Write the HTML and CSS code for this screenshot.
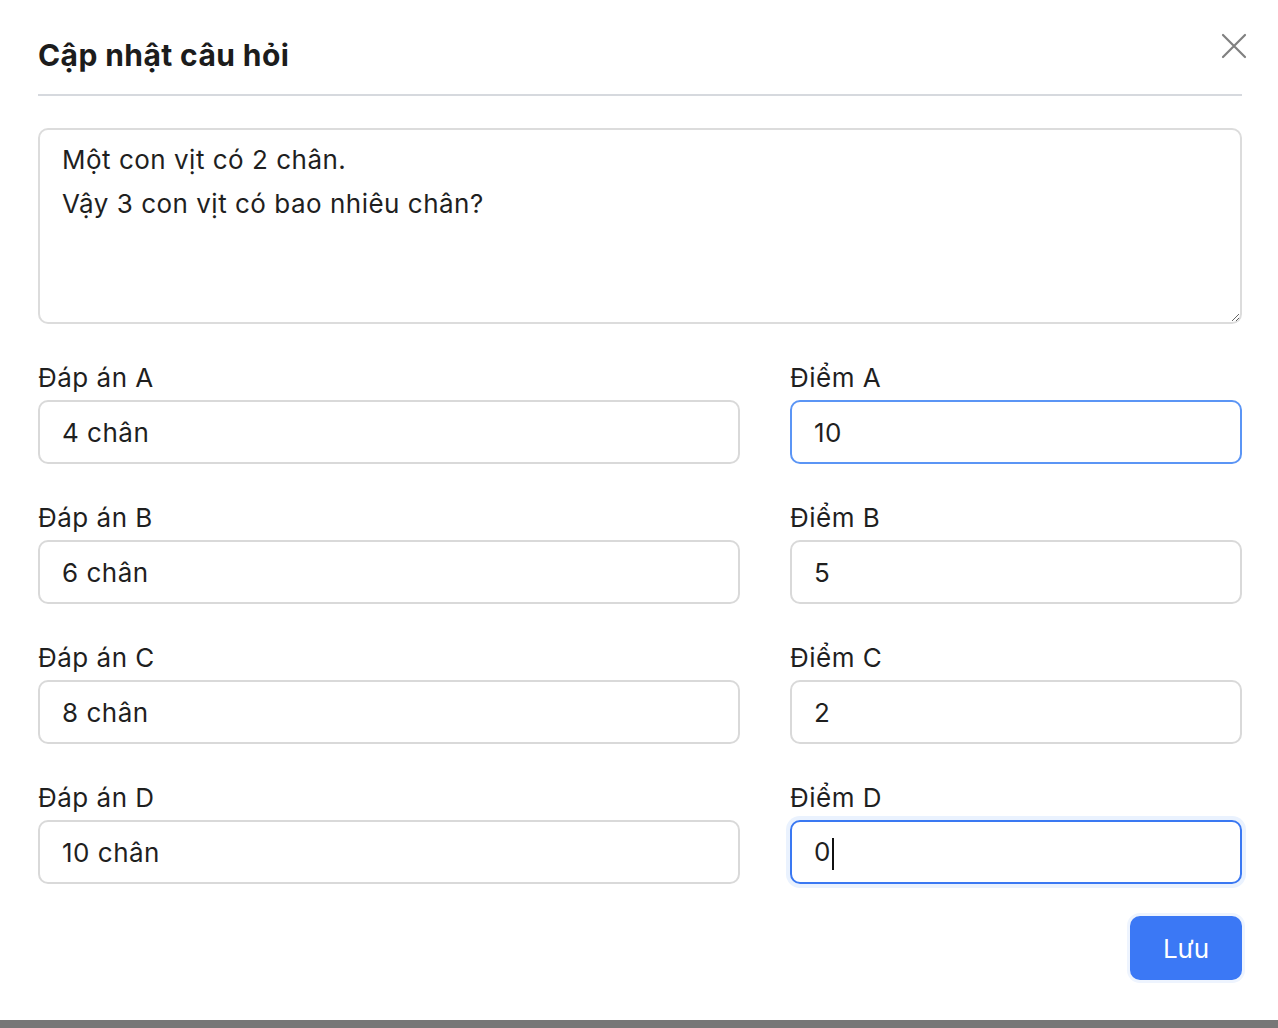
FILE: index.html
```html
<!DOCTYPE html>
<html>

<head>
    <meta charset="utf-8">
    <title>Cập nhật câu hỏi</title>
    <link rel="stylesheet" href="styles.css">
</head>

<body>
    <div class="modal">
        <div class="modal-head">
            <h1 class="modal-title">Cập nhật câu hỏi</h1>
            <button class="btn-close" type="button" aria-label="Đóng">
                <svg width="28" height="28" viewBox="0 0 28 28">
                    <path d="M3 3 L25 25 M25 3 L3 25" stroke="#808080" stroke-width="2.2" stroke-linecap="round" fill="none"/>
                </svg>
            </button>
        </div>

        <textarea class="question">Một con vịt có 2 chân.
Vậy 3 con vịt có bao nhiêu chân?</textarea>

        <div class="answers">
            <div class="field">
                <label>Đáp án A</label>
                <input class="inp" type="text" value="4 chân">
            </div>
            <div class="field">
                <label>Điểm A</label>
                <input class="inp inp-hover" type="text" value="10">
            </div>

            <div class="field">
                <label>Đáp án B</label>
                <input class="inp" type="text" value="6 chân">
            </div>
            <div class="field">
                <label>Điểm B</label>
                <input class="inp" type="text" value="5">
            </div>

            <div class="field">
                <label>Đáp án C</label>
                <input class="inp" type="text" value="8 chân">
            </div>
            <div class="field">
                <label>Điểm C</label>
                <input class="inp" type="text" value="2">
            </div>

            <div class="field">
                <label>Đáp án D</label>
                <input class="inp" type="text" value="10 chân">
            </div>
            <div class="field">
                <label>Điểm D</label>
                <div class="inp inp-focus">0<span class="caret"></span></div>
            </div>
        </div>

        <div class="modal-foot">
            <button class="btn-save" type="button">Lưu</button>
        </div>
    </div>
</body>

</html>
```

FILE: styles.css
```css
/* khung trang */
html, body {
    margin: 0;
    height: 1028px;
}
body {
    background: #777;
    font-family: Inter, "Noto Sans", sans-serif;
    color: #1f1f1f;
}

/* hộp thoại */
.modal {
    background: #fff;
    padding: 0 36px 40px 38px;
}

/* tiêu đề */
.modal-head {
    display: flex;
    justify-content: space-between;
    align-items: flex-start;
    padding-top: 28px;
    padding-bottom: 12px;
    border-bottom: 2px solid #d6d9de;
}
.modal-title {
    margin: 0;
    font-size: 30px;
    line-height: 54px;
    font-weight: 700;
    letter-spacing: 0.4px;
    color: #1c1c1c;
}
.btn-close {
    margin: 4px -6px 0 0;
    padding: 0;
    border: 0;
    background: none;
    line-height: 0;
}

/* nội dung câu hỏi */
.question {
    display: block;
    box-sizing: border-box;
    width: 100%;
    height: 196px;
    margin-top: 32px;
    padding: 8px 22px;
    border: 2px solid #dcdcdc;
    border-radius: 10px;
    font: inherit;
    font-size: 26px;
    line-height: 44px;
    letter-spacing: 0.5px;
    color: #1f1f1f;
    outline: none;
}

/* lưới đáp án - điểm */
.answers {
    display: grid;
    grid-template-columns: 702px 1fr;
    column-gap: 50px;
    row-gap: 38px;
    margin-top: 38px;
}
.field label {
    display: block;
    font-size: 26px;
    line-height: 32px;
    letter-spacing: 0.5px;
    margin-bottom: 6px;
}
.inp {
    display: block;
    box-sizing: border-box;
    width: 100%;
    height: 64px;
    padding: 0 22px;
    border: 2px solid #d9d9d9;
    border-radius: 10px;
    font: inherit;
    font-size: 26px;
    line-height: 60px;
    letter-spacing: 0.5px;
    color: #1f1f1f;
    outline: none;
}
.inp-hover {
    border-color: #5b95f5;
}
.inp-focus {
    border-color: #3a78f2;
    box-shadow: 0 0 0 4px #eaf2fe;
}
.caret {
    display: inline-block;
    width: 2px;
    height: 32px;
    background: #111;
    vertical-align: middle;
    margin-left: 1px;
}

/* nút lưu */
.modal-foot {
    display: flex;
    justify-content: flex-end;
    margin-top: 32px;
}
.btn-save {
    width: 112px;
    height: 64px;
    border: 0;
    border-radius: 10px;
    background: #3b78f5;
    color: #fff;
    font: inherit;
    font-size: 26px;
    box-shadow: 0 0 0 3px #eef4fe;
}
```
